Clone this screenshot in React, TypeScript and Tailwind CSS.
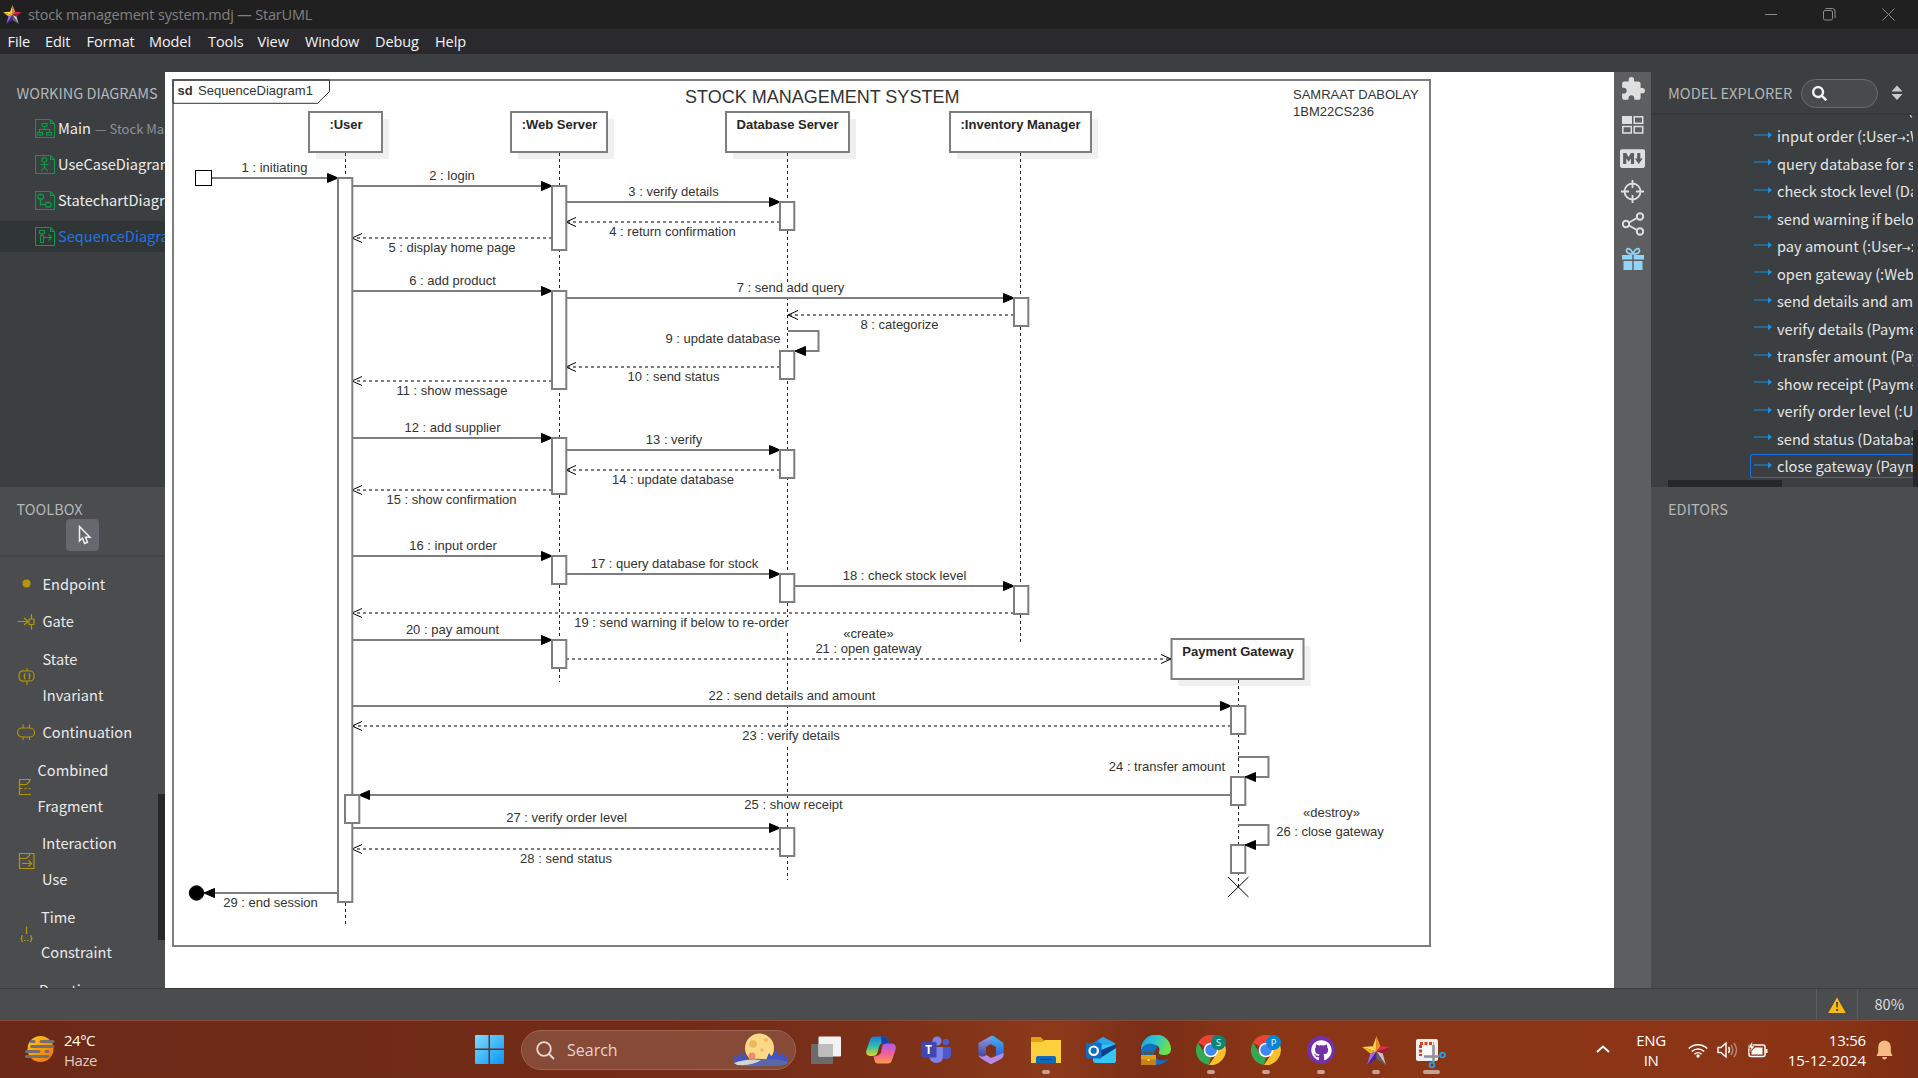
import type { ReactNode } from "react";
import { MdExtension } from "react-icons/md";
import { IoLogoMarkdown } from "react-icons/io5";
import { FaGithub, FaSearch } from "react-icons/fa";

const UI = "font-['Noto_Sans_CJK_SC','Source_Sans_Pro',sans-serif]";
const SEGOE = "font-['Open_Sans','Noto_Sans',sans-serif]";

/* ---------- Diagram ---------- */

type Msg = {
  t: string;
  x1: number;
  x2: number;
  y: number;
  cx: number;
  dash?: boolean;
  stereo?: string;
};

const messages: Msg[] = [
  { t: "1 : initiating", x1: 212, x2: 338, y: 178, cx: 274.5 },
  { t: "2 : login", x1: 352, x2: 552, y: 186, cx: 452 },
  { t: "3 : verify details", x1: 566, x2: 780, y: 202, cx: 673.5 },
  { t: "4 : return confirmation", x1: 780, x2: 566, y: 222, cx: 672.5, dash: true },
  { t: "5 : display home page", x1: 552, x2: 352, y: 238, cx: 452, dash: true },
  { t: "6 : add product", x1: 352, x2: 552, y: 291, cx: 452.5 },
  { t: "7 : send add query", x1: 566, x2: 1014, y: 298, cx: 790.5 },
  { t: "8 : categorize", x1: 1014, x2: 788, y: 315, cx: 899.5, dash: true },
  { t: "10 : send status", x1: 780, x2: 566, y: 367, cx: 673.5, dash: true },
  { t: "11 : show message", x1: 552, x2: 352, y: 381, cx: 452, dash: true },
  { t: "12 : add supplier", x1: 352, x2: 552, y: 438, cx: 452.5 },
  { t: "13 : verify", x1: 566, x2: 780, y: 450, cx: 674 },
  { t: "14 : update database", x1: 780, x2: 566, y: 470, cx: 673, dash: true },
  { t: "15 : show confirmation", x1: 552, x2: 352, y: 490, cx: 451.5, dash: true },
  { t: "16 : input order", x1: 352, x2: 552, y: 556, cx: 453 },
  { t: "17 : query database for stock", x1: 566, x2: 780, y: 574, cx: 674.5 },
  { t: "18 : check stock level", x1: 794, x2: 1014, y: 586, cx: 904.5 },
  { t: "19 : send warning if below to re-order", x1: 1014, x2: 352, y: 613, cx: 681.5, dash: true },
  { t: "20 : pay amount", x1: 352, x2: 552, y: 640, cx: 452.5 },
  { t: "21 : open gateway", x1: 566, x2: 1171, y: 659, cx: 868.5, dash: true, stereo: "«create»" },
  { t: "22 : send details and amount", x1: 352, x2: 1231, y: 706, cx: 792 },
  { t: "23 : verify details", x1: 1231, x2: 352, y: 726, cx: 791, dash: true },
  { t: "25 : show receipt", x1: 1231, x2: 359, y: 795, cx: 793.5 },
  { t: "27 : verify order level", x1: 352, x2: 780, y: 828, cx: 566.5 },
  { t: "28 : send status", x1: 780, x2: 352, y: 849, cx: 566, dash: true },
  { t: "29 : end session", x1: 338, x2: 204, y: 893, cx: 270.5 },
];

const heads = [
  { n: ":User", x: 309, w: 73, y: 112, cx: 346 },
  { n: ":Web Server", x: 511, w: 96, y: 112, cx: 559.5 },
  { n: "Database Server", x: 726, w: 123, y: 112, cx: 787.5 },
  { n: ":Inventory Manager", x: 950, w: 141, y: 112, cx: 1020.5 },
  { n: "Payment Gateway", x: 1171.5, w: 132, y: 639, cx: 1238 },
];

const lifelines = [
  [345.5, 152, 924],
  [559.5, 152, 682],
  [787.5, 152, 880],
  [1020.5, 152, 642],
  [1238.5, 679, 887],
];

const bars = [
  [338, 178, 724],
  [345, 795, 28],
  [552, 186, 64],
  [552, 291, 98],
  [552, 438, 56],
  [552, 556, 28],
  [552, 640, 28],
  [780, 202, 28],
  [780, 351, 28],
  [780, 450, 28],
  [780, 574, 28],
  [780, 828, 28],
  [1014, 298, 28],
  [1014, 586, 28],
  [1231, 706, 28],
  [1231, 777, 28],
  [1231, 845, 28],
];

const loops = [
  { x: 788, y: 331, t: "9 : update database", cx: 723, by: 343 },
  { x: 1238, y: 757, t: "24 : transfer amount", cx: 1167, by: 771 },
  { x: 1238, y: 825, t: "26 : close gateway", cx: 1330, by: 836, stereo: "«destroy»" },
];

const GREY = "#7e7e7e";

function Message({ m }: { m: Msg }) {
  const d = m.x2 > m.x1 ? -1 : 1;
  const below = m.x2 < m.x1;
  return (
    <g>
      <Label x={m.cx} y={m.y + (below ? 14 : -6)} t={m.t} />
      {m.stereo && <Label x={m.cx} y={m.y - 21} t={m.stereo} />}
      <path d={`M${m.x1} ${m.y}H${m.x2}`} stroke={GREY} strokeWidth="2" strokeDasharray={m.dash ? "3 3" : undefined} />
      {m.dash ? (
        <path d={`M${m.x2 + 10 * d} ${m.y - 4.5}L${m.x2} ${m.y}L${m.x2 + 10 * d} ${m.y + 4.5}`} />
      ) : (
        <path d={`M${m.x2 + 10.5 * d} ${m.y - 4.5}L${m.x2} ${m.y}L${m.x2 + 10.5 * d} ${m.y + 4.5}Z`} fill="#000" />
      )}
    </g>
  );
}

function Label({ x, y, t }: { x: number; y: number; t: string }) {
  const w = t.length * 5.8;
  return (
    <g stroke="none">
      <rect x={x - w / 2} y={y - 10} width={w} height="14" fill="#fff" />
      <text x={x} y={y} textAnchor="middle" fill="#333">
        {t}
      </text>
    </g>
  );
}

function Diagram() {
  return (
    <svg
      viewBox="165 72 1449 916"
      width="1449"
      height="916"
      className="block bg-white font-['Liberation_Sans',Arial,sans-serif] text-[13px]"
      fill="none"
      stroke="#000"
      strokeWidth="1"
    >
      <rect x="173" y="80" width="1257" height="866" stroke={GREY} strokeWidth="2" />
      <path d="M173 80H329.5V91.5L317.500 103.3H173Z" stroke="#333" />
      <g fill="#333" stroke="none">
        <text x="177.500" y="95" fontWeight="700">sd</text>
        <text x="198" y="95">SequenceDiagram1</text>
        <text x="685" y="103" fontSize="18">STOCK MANAGEMENT SYSTEM</text>
        <text x="1293" y="99">SAMRAAT DABOLAY</text>
        <text x="1293" y="116">1BM22CS236</text>
      </g>
      {heads.map((h) => (
        <g key={h.n}>
          <rect x={h.x + 7} y={h.y + 7} width={h.w} height="40" fill="#f0f0f0" stroke="none" />
          <rect x={h.x} y={h.y} width={h.w} height="40" fill="#fff" stroke={GREY} strokeWidth="2" />
          <text x={h.cx} y={h.y + 17} textAnchor="middle" fontWeight="700" fill="#262626" stroke="none">
            {h.n}
          </text>
        </g>
      ))}
      {lifelines.map(([x, a, b]) => (
        <path key={x} d={`M${x} ${a + 1}V${b}`} strokeDasharray="3 3" stroke="#222" />
      ))}
      {messages.map((m) => (
        <Message key={m.t} m={m} />
      ))}
      {bars.map(([x, y, h]) => (
        <rect key={`${x}-${y}`} x={x} y={y} width="14.300" height={h} fill="#fff" stroke={GREY} strokeWidth="2" />
      ))}
      <rect x="195.500" y="170.500" width="16" height="15" fill="#fff" />
      <circle cx="196.500" cy="893" r="7.200" fill="#000" />
      {loops.map((l) => (
        <g key={l.t}>
          <path d={`M${l.x} ${l.y}h30.500v20h-14`} stroke={GREY} strokeWidth="2" />
          <path d={`M${l.x + 7} ${l.y + 20}l10.500 -4.500v9z`} fill="#000" />
          <Label x={l.cx} y={l.by} t={l.t} />
          {l.stereo && <Label x={1331.5} y={817} t={l.stereo} />}
        </g>
      ))}
      <path d="M1228 877L1248.500 897M1248.500 877L1228 897" />
    </svg>
  );
}

/* ---------- Window chrome ---------- */

function StarLogo({ size }: { size: number }) {
  return (
    <svg width={size} height={size} viewBox="0 0 28 28">
      <path d="M14 0L14 15L10.500 10Z" fill="#fbd04a" />
      <path d="M14 0L17.800 9.800L14 15Z" fill="#f0901c" />
      <path d="M0 10.500L10.500 10L14 15Z" fill="#ffde5a" />
      <path d="M0 10.500L8 17L14 15Z" fill="#f5b21e" />
      <path d="M28 10.500L17.800 9.800L14 15Z" fill="#e8284d" />
      <path d="M28 10.500L20 17L14 15Z" fill="#a3183f" />
      <path d="M5 28L8 17L14 15Z" fill="#a06af0" />
      <path d="M5 28L14 22L14 15Z" fill="#4a1fa8" />
      <path d="M23 28L20 17L14 15Z" fill="#c4c4cc" />
      <path d="M23 28L14 22L14 15Z" fill="#62626e" />
    </svg>
  );
}

const menus: [string, string][] = [
  ["File", "w-[37.5px]"],
  ["Edit", "w-[41.5px]"],
  ["Format", "w-[62.5px]"],
  ["Model", "w-[59px]"],
  ["Tools", "w-[49.5px]"],
  ["View", "w-[47.5px]"],
  ["Window", "w-[70px]"],
  ["Debug", "w-[60px]"],
  ["Help", "w-[40px]"],
];

function TitleBar() {
  return (
    <>
      <div className={`flex h-[29px] items-center bg-[#202020] pl-[3px] ${SEGOE}`}>
        <StarLogo size={19} />
        <span className="ml-[6px] flex-1 text-[14.5px] tracking-[-0.18px] text-[#808080]">
          stock management system.mdj — StarUML
        </span>
        <svg width="12" height="12" className="mr-[46px]" stroke="#8a8a8a" fill="none">
          <path d="M0 5.5H12" />
        </svg>
        <svg width="13" height="13" className="mr-[46px]" stroke="#8a8a8a" fill="none">
          <rect x="0.5" y="2.5" width="9" height="9.5" rx="1.5" />
          <path d="M2.5 0.5H9.5Q12 0.5 12 3V10" />
        </svg>
        <svg width="13" height="13" className="mr-[23px]" stroke="#8a8a8a" fill="none">
          <path d="M0.5 0.5L12.5 12.5M12.5 0.5L0.5 12.5" />
        </svg>
      </div>
      <div className={`flex h-[25px] items-center bg-[#29292e] pl-[7.5px] text-[14.5px] tracking-[-0.1px] text-[#f4f4f4] ${SEGOE}`}>
        {menus.map(([m, w]) => (
          <span key={m} className={`${w} shrink-0`}>
            {m}
          </span>
        ))}
      </div>
    </>
  );
}

/* ---------- Left side ---------- */

function DiagramIcon({ children }: { children: ReactNode }) {
  return (
    <svg width="20" height="20" viewBox="0 0 20 20" fill="none" stroke="#0b9b43" strokeWidth="1.1" className="mr-[3px] shrink-0">
      <path d="M14.5 0.5H0.5V18.5H19.5V5M15.5 0.5V4.5H19.5Z" />
      {children}
    </svg>
  );
}

const working = [
  {
    n: "Main",
    icon: <path d="M7 4.5h5v3H7zM9.5 7.5v3M4.5 13v-2.5h10V13M2.5 13.5h5v2.5h-5zM11.5 13.5h5v2.5h-5z" />,
  },
  {
    n: "UseCaseDiagram1",
    icon: <path d="M7 5a2.4 2.4 0 1 0 4.8 0a2.4 2.4 0 1 0-4.8 0M9.4 7.4v4.6M5.5 9.5h8M6 16.5l3.4-4.5l3.4 4.5" />,
  },
  {
    n: "StatechartDiagram1",
    icon: <path d="M4 3.5h3.500l1 1v2.500l-1 1H4l-1-1V4.500zM5.500 8v5.500h5M11.500 11.500h3.500l1 1v2.500l-1 1h-3.500l-1-1v-2.500z" strokeWidth="1.300" />,
  },
  {
    n: "SequenceDiagram1",
    icon: <path d="M4.5 3.5h5v3h-5zM7 6.5v2M5.5 8.5h3v7h-3zM8.5 10.5h8M13.5 7.5l3 3l-3 3" />,
  },
];

function WorkingDiagrams() {
  return (
    <div className="flex h-[433px] flex-col overflow-hidden bg-[#3b3f41] pt-[26px]">
      <div className="h-[26px] pl-[16.5px] text-[14.5px] leading-[26px] whitespace-nowrap text-[#b4b6b7]">WORKING DIAGRAMS</div>
      <div className="mt-[7px] flex flex-col gap-[5px]">
        {working.map((w, i) => (
          <div key={w.n} className={`flex h-[31px] items-center pl-[35px] whitespace-nowrap ${i === 3 ? "bg-[#303536]" : ""}`}>
            <DiagramIcon>{w.icon}</DiagramIcon>
            <span className={`text-[14.6px] leading-none ${i === 3 ? "text-[#1f74ea]" : "text-[#eceded]"}`}>{w.n}</span>
            {i === 0 && <span className="ml-1 text-[13px] leading-none text-[#8f9293]">— Stock Management</span>}
          </div>
        ))}
      </div>
    </div>
  );
}

const tools: { lines: string[]; icon: ReactNode; pad: string }[] = [
  { lines: ["Endpoint"], pad: "w-[25.5px]", icon: <circle cx="9.5" cy="9.5" r="4" fill="#b39506" stroke="none" /> },
  { lines: ["Gate"], pad: "w-[25.5px]", icon: <path d="M0.5 9.5H11M7 6l4 3.5l-4 3.5M12 7h5v5.5h-5zM14.5 2v5M14.5 12.5v5" /> },
  {
    lines: ["State", "Invariant"],
    pad: "w-[25.5px]",
    icon: <path d="M7 4h6a4 4 0 0 1 4 4v2a4 4 0 0 1-4 4H7a4 4 0 0 1-5-4V8a4 4 0 0 1 5-4zM10 1v3M10 14v4M8.5 6.5q-1.5 0-1 1.5t-1 1q1.5 0 1 1.5t1 1M11.5 6.5q1.5 0 1 1.5t1 1q-1.5 0-1 1.5t-1 1" />,
  },
  { lines: ["Continuation"], pad: "w-[25.5px]", icon: <path d="M5 5h8a4.5 4.5 0 0 1 0 9H5a4.5 4.5 0 0 1 0-9zM6 1.5V5M12.5 1.5V5M6 14v3M12.5 14v3" /> },
  { lines: ["Combined", "Fragment"], pad: "w-[20.5px]", icon: <path d="M14 1.5H2.5V16.5H14M12.5 1.5V3.5L9.5 6.5H2.5M2.5 10.5h3M7.5 10.5h2M11.5 10.5h2" /> },
  { lines: ["Interaction", "Use"], pad: "w-[25px]", icon: <path d="M2.5 1.5H17V16.5H2.5ZM12.5 1.5V3.5L9.5 6.5H2.5M5 11.5h9.5M11.5 8.5l3 3l-3 3" /> },
  {
    lines: ["Time", "Constraint"],
    pad: "w-[24px]",
    icon: <path d="M9.5 1.5V9M6 10.5q-1.5 0-1.2 1.5t-1.3 1.5q1.6 0 1.3 1.5t1.2 1.5M13 10.5q1.5 0 1.2 1.5t1.3 1.5q-1.6 0-1.3 1.5t-1.2 1.5M7 15.5h1.5M10 15.5h1.5" />,
  },
  { lines: ["Duration"], pad: "w-[22px]", icon: null },
];

function Toolbox() {
  return (
    <div className="flex flex-1 flex-col overflow-hidden bg-[#4b4c4e]">
      <div className="h-[32px] pt-[9px] pl-[16.5px] text-[14.5px] leading-[26px] text-[#b4b6b7]">TOOLBOX</div>
      <div className="flex h-[38px] shrink-0 border-b-2 border-[#454648] pl-[66px]">
        <div className="flex h-8 w-[33px] items-center justify-center rounded-[4px] bg-[#65696d]">
          <svg width="14" height="20" viewBox="0 0 14 20" fill="none" stroke="#f0f0f0" strokeWidth="1.5" className="ml-[4px]">
            <path d="M1.5 1.5V16l3-3l2 5.5l3-1.2l-2-5H12Z" />
          </svg>
        </div>
      </div>
      <div className="flex min-h-0 flex-1 justify-between overflow-hidden">
        <div className="flex flex-col pt-[7.5px]">
          {tools.map((t) => (
            <div key={t.lines[0]} className="flex shrink-0 items-center pl-[17px]">
              <span className={`${t.pad} shrink-0`}>
                <svg width="19" height="19" viewBox="0 0 19 19" fill="none" stroke="#b39506" strokeWidth="1.2">
                  {t.icon}
                </svg>
              </span>
              <span className="flex flex-col py-px text-[14.6px] text-[#e9e9ea]">
                {t.lines.map((l) => (
                  <span key={l} className="h-[35.7px] leading-[36px]">
                    {l}
                  </span>
                ))}
              </span>
            </div>
          ))}
        </div>
        <div className="mt-[237px] h-[146px] w-[7px] shrink-0 bg-[#272727]" />
      </div>
    </div>
  );
}

/* ---------- Right side ---------- */

function SideTools() {
  return (
    <div className="flex w-[37px] shrink-0 flex-col items-center bg-[#5d5e60] text-[#dfdfdf]">
      <MdExtension className="mt-[4px] size-[26px]" />
      <svg width="22" height="18" className="mt-[14px]" fill="none" stroke="#dfdfdf" strokeWidth="1.5">
        <rect x="0" y="0" width="10" height="8" fill="#dfdfdf" stroke="none" />
        <rect x="12.2" y="0.8" width="8.5" height="6.5" />
        <rect x="0.8" y="10.5" width="8.5" height="6.5" />
        <rect x="12.2" y="10.5" width="8.5" height="6.5" />
      </svg>
      <IoLogoMarkdown className="mt-[12px] size-[25px]" />
      <svg width="23" height="23" viewBox="0 0 23 23" className="mt-[9px]" fill="none" stroke="#dfdfdf" strokeWidth="1.8">
        <circle cx="11.5" cy="11.5" r="8" />
        <path d="M11.5 0V8M11.5 15V23M0 11.5H8M15 11.5H23" />
      </svg>
      <svg width="22" height="24" viewBox="0 0 22 24" className="mt-[9px]" fill="none" stroke="#dfdfdf" strokeWidth="2">
        <circle cx="4" cy="12" r="3.2" />
        <circle cx="18" cy="4.5" r="3.2" />
        <circle cx="18" cy="19.5" r="3.2" />
        <path d="M7 10.5L15 6M7 13.5L15 18" />
      </svg>
      <svg width="22" height="23" viewBox="0 0 22 23" className="mt-[11px]" fill="#92d4f8">
        <path d="M0 8h10.3v4.5H0zM11.7 8H22v4.5H11.7zM1.5 14h8.8v9H1.5zM11.7 14h8.8v9h-8.8z" />
        <path d="M11 7C9 1 4.5 0 4.5 4Q5 7 11 7ZM11 7C13 1 17.5 0 17.5 4Q17 7 11 7Z" fill="none" stroke="#92d4f8" strokeWidth="1.7" />
      </svg>
    </div>
  );
}

const tree = [
  "show confirmation (:Web",
  "input order (:User→:Web",
  "query database for stock",
  "check stock level (Database",
  "send warning if below to",
  "pay amount (:User→:Web",
  "open gateway (:Web Server",
  "send details and amount",
  "verify details (Payment",
  "transfer amount (Payment",
  "show receipt (Payment",
  "verify order level (:User",
  "send status (Database",
  "close gateway (Payment",
];

function TreeText({ t }: { t: string }) {
  const [a, b] = t.split("→");
  return (
    <span className="ml-[5px] text-[14.6px] leading-[22px] text-[#e4e5e5]">
      {a}
      {b && <span className="font-['DejaVu_Sans',sans-serif] text-[10.5px] leading-none">→</span>}
      {b}
    </span>
  );
}

function Explorer() {
  return (
    <div className="flex w-[267px] shrink-0 flex-col overflow-hidden">
      <div className="flex h-[433px] flex-col bg-[#3b3f41]">
        <div className="flex h-[61px] shrink-0 items-center border-b-2 border-[#37393b] pt-[19px] pl-[17px]">
          <span className="w-[133px] shrink-0 text-[14.6px] leading-none whitespace-nowrap text-[#b4b6b7]">MODEL EXPLORER</span>
          <span className="flex h-[29px] w-[77px] items-center rounded-full border border-[#696c6e] bg-[#484b4d] pl-[10px]">
            <FaSearch className="size-[15px] text-[#f0f0f0]" />
          </span>
          <svg width="12" height="16" className="ml-[13px]" fill="#c9cacb">
            <path d="M0.5 6.5L6 0.5L11.5 6.5ZM0.5 9L6 15L11.5 9Z" />
          </svg>
        </div>
        <div className="flex min-h-0 flex-1">
          <div className="flex min-w-0 flex-1 flex-col">
            <div className="flex min-h-0 flex-1 flex-col justify-end overflow-hidden">
              {tree.map((t, i) => (
                <div
                  key={t}
                  className={`ml-[99px] flex h-[24px] shrink-0 items-center border whitespace-nowrap ${
                    i === tree.length - 1 ? "mb-[2px] rounded-l-[3px] border-[#1a6fe0] border-r-transparent" : "mb-[3.5px] border-transparent"
                  }`}
                >
                  <svg width="18" height="8" className="mt-[-3px] ml-[3px] shrink-0" fill="#1b8fe0">
                    <path d="M0 3.5H14V1L18 4L14 7.5V4.5H0Z" />
                  </svg>
                  <TreeText t={t} />
                </div>
              ))}
            </div>
            <div className="ml-[17px] h-[7px] w-[114px] bg-[#272727]" />
          </div>
          <div className="mt-[315px] w-[5px] shrink-0 bg-[#272727]" />
        </div>
      </div>
      <div className="flex-1 bg-[#4b4c4e] pt-[9px] pl-[17px] text-[14.6px] leading-[26px] text-[#b4b6b7]">EDITORS</div>
    </div>
  );
}

/* ---------- Status bar ---------- */

function StatusBar() {
  return (
    <div className="flex h-[32px] shrink-0 justify-end border-t border-[#3a3b3c] bg-[#4b4c4e]">
      <div className="flex w-[41px] items-center justify-center border-l border-[#5b5c5e]">
        <svg width="18" height="16" viewBox="0 0 18 16">
          <path d="M9 0.5L17.8 16H0.2Z" fill="#fbb90f" />
          <path d="M8 5h2.2l-0.4 5.5h-1.4zM8 12h2.2v2H8z" fill="#4b4c4e" />
        </svg>
      </div>
      <div className="flex w-[61px] items-center border-l border-[#5b5c5e] pl-[16.5px] text-[14.6px] leading-none text-[#dcdddd]">80%</div>
    </div>
  );
}

/* ---------- Taskbar ---------- */

function App365() {
  return (
    <svg width="28" height="30" viewBox="0 0 28 30">
      <defs>
        <linearGradient id="m1" x1="0" y1="0" x2="0" y2="1">
          <stop offset="0" stopColor="#8aa0e8" />
          <stop offset="1" stopColor="#3a3a9c" />
        </linearGradient>
        <linearGradient id="m2" x1="0" y1="0" x2="0" y2="1">
          <stop offset="0" stopColor="#3fb4f0" />
          <stop offset="1" stopColor="#3556d8" />
        </linearGradient>
      </defs>
      <path d="M14 1L1.500 8V20L9 24V12L19 6Z" fill="url(#m1)" />
      <path d="M14 1Q16 0 18 2L26.500 8V21L19 24V12L12 8Q16 5 14 1Z" fill="url(#m2)" />
      <path d="M1.500 20Q2 23 12.500 28.500Q14 29.500 15.500 28.500L24 24Q27 22 26.500 18L14 23L9.500 20Q5 23 1.500 20Z" fill="#b48be4" />
      <path d="M9.500 12.500L14 10L19 12.500V18L14 21L9.500 18.500Z" fill="#7d3018" />
    </svg>
  );
}

function Copilot() {
  return (
    <svg width="30" height="28" viewBox="0 0 30 28">
      <defs>
        <linearGradient id="c1" x1="0" y1="0" x2="0" y2="1">
          <stop offset="0" stopColor="#1b7be0" />
          <stop offset="0.5" stopColor="#2fc0b0" />
          <stop offset="1" stopColor="#e4d322" />
        </linearGradient>
        <linearGradient id="c2" x1="0" y1="0" x2="0" y2="1">
          <stop offset="0" stopColor="#a45cf0" />
          <stop offset="0.5" stopColor="#f0609a" />
          <stop offset="1" stopColor="#ff9a4a" />
        </linearGradient>
      </defs>
      <path d="M8 0.5H18Q21 0.5 22 4L23 7H17Q14 7 13 11L11 18Q10 20 7 20H4Q-1 19.5 0.5 14L4 4Q5 0.5 8 0.5Z" fill="url(#c1)" />
      <path d="M15 0.5H18Q21 0.5 22 4L23 7H15.5Z" fill="#1741b0" />
      <path d="M22 27.5H12Q9 27.5 8.5 24L7.5 20Q12 21 13.5 17L16 10Q17 7.5 20 7.5H26Q31 8 29.5 14L26 24Q25 27.5 22 27.5Z" fill="url(#c2)" />
      <path d="M13.500 11.500L16.500 8.500L15 17L12 19.500Z" fill="#7d3018" />
    </svg>
  );
}

function Teams() {
  return (
    <svg width="30" height="28" viewBox="0 0 30 28">
      <circle cx="25" cy="6" r="3.2" fill="#5059c9" />
      <circle cx="16" cy="5" r="4.6" fill="#7b83eb" />
      <path d="M19 11H30V18Q30 23 25 23Q21 23 19 20Z" fill="#5059c9" />
      <path d="M8 11H22V20Q22 27 15.5 27Q9 27 8 20Z" fill="#7b83eb" />
      <rect x="0" y="6" width="15.5" height="15.5" rx="1.2" fill="#4048b0" />
      <text x="7.7" y="18" textAnchor="middle" fontSize="11.5" fontWeight="700" fill="#fff">T</text>
    </svg>
  );
}

function Folder() {
  return (
    <svg width="30" height="28" viewBox="0 0 30 28">
      <path d="M0 2Q0 1 1 1H9.5L13 4.5V10H0Z" fill="#e3a208" />
      <path d="M0 6H11L14 4H30V27H0Z" fill="#fccf3c" />
      <path d="M5 27V22Q5 20 7 20H23Q25 20 25 22V27Z" fill="#0f6cbd" />
      <path d="M9 23.5H21" stroke="#0b4f90" strokeWidth="1.5" />
    </svg>
  );
}

function Outlook() {
  return (
    <svg width="30" height="28" viewBox="0 0 30 28">
      <path d="M7 7L17 1L29 7V12H7Z" fill="#1587dc" />
      <path d="M12 4L17 1L30 8L20 14Z" fill="#28a8ea" />
      <path d="M7 10L30 8V25Q30 27 28 27H10Q7 27 7 24Z" fill="#35c6f5" />
      <path d="M10 16L30 8V12L16 21Z" fill="#0a3f8f" />
      <rect x="0" y="7" width="15.5" height="15.5" rx="1.2" fill="#0f6cc4" />
      <circle cx="7.7" cy="14.7" r="4.2" fill="none" stroke="#fff" strokeWidth="2.2" />
    </svg>
  );
}

function Edge() {
  return (
    <svg width="30" height="30" viewBox="0 0 30 30">
      <defs>
        <linearGradient id="e1" x1="0" y1="0" x2="1" y2="0.4">
          <stop offset="0" stopColor="#1e9de8" />
          <stop offset="0.55" stopColor="#30c8c8" />
          <stop offset="1" stopColor="#6ee04a" />
        </linearGradient>
      </defs>
      <path d="M0 15A15 15 0 0 1 30 14Q30 20 23 20Q17 20 18 17Q20 11 14 10Q5 9 0 15Z" fill="url(#e1)" />
      <path d="M0 15Q4 7 12 9Q18 11 15 14Q11 18 15 23Q20 28 28 23Q23 30 15 30A15 15 0 0 1 0 15Z" fill="#0f6fc0" />
      <rect x="0" y="20" width="15" height="10" fill="#c87f10" />
      <path d="M0 20H15V24.5H0Z" fill="#e39a18" />
      <path d="M4 20V18H11V20" stroke="#7a4a08" strokeWidth="1.5" fill="none" />
      <rect x="6.5" y="24" width="2" height="2" fill="#ffe27a" />
    </svg>
  );
}

function Chrome({ letter, tint }: { letter: string; tint: string }) {
  return (
    <svg width="30" height="30" viewBox="0 0 30 30">
      <path d="M15 15L2 7.5A15 15 0 0 1 28 7.5L28 9H15Z" fill="#ea4335" />
      <path d="M2 7.5L9 19L15 22L13 30A15 15 0 0 1 2 7.5Z" fill="#34a853" />
      <path d="M28.5 9A15 15 0 0 1 13 30L21 18V9Z" fill="#fbc02d" />
      <circle cx="15" cy="15" r="7.3" fill="#fff" />
      <circle cx="15" cy="15" r="5.8" fill="#4285f4" />
      <circle cx="22.5" cy="7.5" r="7.5" fill={tint} />
      <text x="22.5" y="11" textAnchor="middle" fontSize="9.5" fill="#e8f4f4">{letter}</text>
    </svg>
  );
}

function Snip() {
  return (
    <svg width="30" height="32" viewBox="0 0 30 32" className="mt-[5px]">
      <rect x="0" y="2" width="22" height="22" rx="2" fill="#eeeeee" />
      <path d="M4 6.5H18M4.500 8V19" stroke="#d8431f" strokeWidth="3" strokeDasharray="3 1.5" fill="none" />
      <path d="M7 9H16V19H7Z" fill="#fafafa" />
      <path d="M17.5 8V25M8 19.500H23" stroke="#8c9298" strokeWidth="2.5" />
      <circle cx="26.5" cy="18" r="2.4" fill="none" stroke="#2b9fe0" strokeWidth="1.8" />
      <circle cx="16" cy="28" r="2.4" fill="none" stroke="#2b9fe0" strokeWidth="1.8" />
    </svg>
  );
}

function TaskView() {
  return (
    <svg width="30" height="28" viewBox="0 0 30 28">
      <rect x="0" y="8" width="22" height="20" rx="1" fill="#6b6b6b" />
      <rect x="7.5" y="0.5" width="22.5" height="20" rx="1" fill="#f2f2f2" />
      <rect x="7.5" y="8" width="14.5" height="12.5" fill="#bdbdbd" />
    </svg>
  );
}

const apps: { k: string; icon: ReactNode; dot?: string }[] = [
  { k: "taskview", icon: <TaskView /> },
  { k: "copilot", icon: <Copilot /> },
  { k: "teams", icon: <Teams /> },
  { k: "m365", icon: <App365 /> },
  { k: "folder", icon: <Folder />, dot: "w-2" },
  { k: "outlook", icon: <Outlook /> },
  { k: "edge", icon: <Edge /> },
  { k: "chrome-s", icon: <Chrome letter="S" tint="#0b8577" />, dot: "w-2" },
  { k: "chrome-p", icon: <Chrome letter="P" tint="#0986d3" />, dot: "w-2" },
  {
    k: "github",
    icon: (
      <span className="flex size-7 items-center justify-center rounded-full bg-[#7430a8]">
        <FaGithub className="size-[21px] text-white" />
      </span>
    ),
    dot: "w-2",
  },
  { k: "staruml", icon: <StarLogo size={29} />, dot: "w-2" },
  { k: "snip", icon: <Snip />, dot: "w-[17px]" },
];

function Moon() {
  return (
    <svg width="56" height="34" viewBox="0 0 56 34">
      <circle cx="26.5" cy="15" r="14.5" fill="#fbd886" />
      <circle cx="20" cy="11" r="3.8" fill="#e9b95c" />
      <circle cx="33" cy="7" r="2" fill="#e9b95c" />
      <circle cx="29" cy="17" r="2" fill="#eec06a" />
      <circle cx="19" cy="23" r="3.5" fill="#f08a6a" />
      <path d="M0 29L2 21L4 26L7 18L9 25L12 20L15 27L16 30Z" fill="#3f55c8" />
      <path d="M33 27L36 20L39 24L43 16L46 24L49 19L51 25L54 22L55 30Z" fill="#3f55c8" />
      <path d="M1 30Q14 25 30 26Q50 26 56 30Q48 34 30 33Q10 35 1 30Z" fill="#5a68a8" />
      <path d="M1 30Q14 25 28 27Q20 33 4 32Z" fill="#d5d5cc" />
    </svg>
  );
}

function Taskbar() {
  return (
    <div
      className={`flex h-[58px] shrink-0 border-t border-[#8a4a3a] bg-[linear-gradient(90deg,#6c2917_0%,#732c18_35%,#7a2f18_45%,#8c3a1a_55%,#7a2e16_60%,#8a3615_66%,#8a3415_95%,#7c2d13_100%)] ${SEGOE}`}
    >
      <div className="flex w-[475px] shrink-0 items-center pl-[25px]">
        <svg width="30" height="28" viewBox="0 0 30 28" className="-mt-[1px]">
          <defs>
            <linearGradient id="sun" x1="0" y1="0" x2="1" y2="1">
              <stop offset="0" stopColor="#ffcc18" />
              <stop offset="1" stopColor="#f26a0c" />
            </linearGradient>
          </defs>
          <circle cx="15.5" cy="14" r="13" fill="url(#sun)" />
          <path d="M6 6.5H9M16 6.5H28M6.5 11.5H28M1.5 16.5H14M21 16.5H23M1.5 21.5H23" stroke="#76706c" strokeWidth="3" strokeLinecap="round" />
        </svg>
        <div className="ml-[9px] flex flex-col text-[15px] leading-5 tracking-[-0.5px] text-white">
          <span>24°C</span>
          <span className="text-[#e0cbc5]">Haze</span>
        </div>
      </div>
      <div className="flex w-[46px] shrink-0 items-center">
        <svg width="29" height="29" viewBox="0 0 30 30">
          <defs>
            <linearGradient id="win" x1="0" y1="0" x2="1" y2="1">
              <stop offset="0" stopColor="#7fdcff" />
              <stop offset="1" stopColor="#0a94f5" />
            </linearGradient>
          </defs>
          <path d="M0 1Q0 0 1 0H14V14H0ZM15.5 0H29Q30 0 30 1V14H15.5ZM0 15.5H14V30H1Q0 30 0 29ZM15.5 15.5H30V29Q30 30 29 30H15.5Z" fill="url(#win)" />
        </svg>
      </div>
      <div className="mt-[9px] flex h-10 w-[275px] shrink-0 items-center rounded-full border border-[#9b6554] bg-[#864a37] pl-[14px]">
        <svg width="19" height="19" viewBox="0 0 19 19" fill="none" stroke="#ead9d4" strokeWidth="1.8">
          <circle cx="8" cy="8" r="6.8" />
          <path d="M12.5 12.5L18 18" />
        </svg>
        <span className="ml-[12px] flex-1 text-[16px] text-[#e6d3cd]">Search</span>
        <span className="mr-[6px]">
          <Moon />
        </span>
      </div>
      <div className="ml-[2.5px] flex shrink-0">
        {apps.map((a) => (
          <div key={a.k} className="flex w-[55px] flex-col items-center">
            <div className="mt-[13px] flex h-[32px] items-center">{a.icon}</div>
            {a.dot && <span className={`mt-[4px] h-1 rounded-full bg-[#c9a093] ${a.dot}`} />}
          </div>
        ))}
      </div>
      <div className="ml-auto flex items-center text-white">
        <svg width="14" height="8" className="-mt-px" fill="none" stroke="#fff" strokeWidth="2">
          <path d="M1 7L7 1.5L13 7" />
        </svg>
        <div className="ml-[25px] flex w-[32px] flex-col items-center text-[15px] leading-5 tracking-[-0.4px]">
          <span>ENG</span>
          <span>IN</span>
        </div>
        <svg width="20" height="16" viewBox="0 0 20 16" className="ml-[21px]" fill="none" stroke="#fff" strokeWidth="1.5">
          <path d="M0.8 6.5A13 13 0 0 1 19.2 6.5M3.8 9.5A8.8 8.8 0 0 1 16.2 9.5M6.5 12.2A5 5 0 0 1 13.5 12.2" />
          <circle cx="10" cy="14" r="1.7" fill="#fff" stroke="none" />
        </svg>
        <svg width="22" height="18" viewBox="0 0 22 18" className="ml-[9px]" fill="none" stroke="#fff" strokeWidth="1.4">
          <path d="M1 6.5H4L9 2V16L4 11.5H1Z" />
          <path d="M11.5 6Q13.5 9 11.5 12" />
          <path d="M14 4Q17.5 9 14 14M17 2Q22 9 17 16" stroke="#b98773" />
        </svg>
        <svg width="21" height="17" viewBox="0 0 21 17" className="ml-[9px]" fill="none" stroke="#fff" strokeWidth="1.5">
          <rect x="1" y="4" width="16" height="11.5" rx="2" />
          <path d="M3.5 13.5V10L7 6.5H14.5V13.5Z" fill="#fff" stroke="none" />
          <path d="M18.5 8V12" strokeWidth="2" />
          <path d="M4.5 0L0 7H3L1.5 11.5L7 5H4.2Z" fill="#fff" stroke="#8b3516" strokeWidth="0.6" />
        </svg>
        <div className="ml-[17px] flex w-[80px] flex-col items-end text-[15px] leading-5 whitespace-nowrap">
          <span className="tracking-[-0.2px]">13:56</span>
          <span>15-12-2024</span>
        </div>
        <svg width="17" height="20" viewBox="0 0 17 20" className="mr-[25px] ml-[10px]" fill="#f5bd83">
          <path d="M8.5 0.5A6.3 6.3 0 0 1 14.8 6.8V12L16.5 16H0.5L2.2 12V6.8A6.3 6.3 0 0 1 8.5 0.5ZM6 17H11Q10.5 19.5 8.5 19.5Q6.5 19.5 6 17Z" />
        </svg>
      </div>
    </div>
  );
}

export default function App() {
  return (
    <div className={`flex h-[1078px] w-[1918px] flex-col overflow-hidden bg-[#3b3f41] ${UI}`}>
      <TitleBar />
      <div className="flex min-h-0 flex-1">
        <div className="flex w-[165px] shrink-0 flex-col">
          <WorkingDiagrams />
          <Toolbox />
        </div>
        <div className="flex flex-1 flex-col">
          <div className="h-[18px] bg-[#3b3f41]" />
          <div className="flex flex-1">
            <Diagram />
            <SideTools />
          </div>
        </div>
        <Explorer />
      </div>
      <StatusBar />
      <Taskbar />
    </div>
  );
}
